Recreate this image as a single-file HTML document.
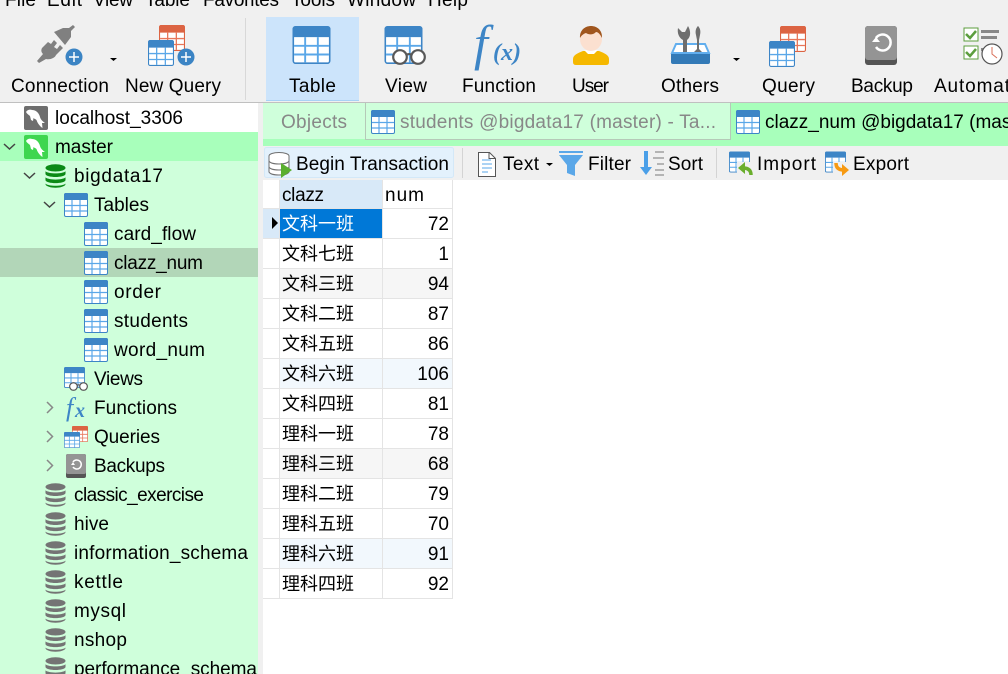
<!DOCTYPE html>
<html><head><meta charset="utf-8"><style>
html,body{margin:0;padding:0;background:#fff;overflow:hidden}
svg{display:block}
text{font-family:"Liberation Sans","Noto Sans CJK SC",sans-serif;font-size:19px;fill:#000}
.g{fill:#888}
.c{font-size:18px}
.fx{font-family:"Liberation Serif",serif;font-style:italic;fill:#3d85c6}
</style></head><body>
<svg width="1008" height="674" viewBox="0 0 1008 674" xmlns="http://www.w3.org/2000/svg">
<defs>
<symbol id="tb" viewBox="0 0 24 24">
<rect x=".5" y=".5" width="23" height="23" rx="1.500" fill="#fff" stroke="#3d85c6"/>
<path d="M0 2a2 2 0 0 1 2-2h20a2 2 0 0 1 2 2v5H0z" fill="#3d85c6"/>
<path d="M1 12.500h22M1 18h22M8 7v16M16 7v16" stroke="#5aa7e8" stroke-width="1.200" fill="none"/>
</symbol>
<symbol id="tr" viewBox="0 0 24 24">
<rect x=".5" y=".5" width="23" height="23" rx="1.500" fill="#fff" stroke="#dc6443"/>
<path d="M0 2a2 2 0 0 1 2-2h20a2 2 0 0 1 2 2v5H0z" fill="#dc6443"/>
<path d="M1 12.500h22M1 18h22M8 7v16M16 7v16" stroke="#e8765a" stroke-width="1.200" fill="none"/>
</symbol>
<symbol id="db" viewBox="0 0 22 25">
<ellipse cx="11" cy="4" rx="10.500" ry="3.800" fill="currentColor"/>
<path d="M.5 7.500c3 3 18 3 21 0v3c-1 4-20 4-21 0zM.5 14c3 3 18 3 21 0v3c-1 4-20 4-21 0zM.5 20.500c3 3 18 3 21 0v.5c-1 5-20 5-21 0z" fill="currentColor"/>
</symbol>
<symbol id="dol" viewBox="0 0 24 24">
<rect width="24" height="24" rx="2" fill="currentColor"/>
<path d="M2 6c1-2 4-3 6-2 4 0 7 3 8 7 .5 2 2 4 5 6l-3 0 .5 5c-3-2-5-5-6-8-1-1-2-1-3-2l-.5 3-2-1-1-4c-1-1-3-2-4-4z" fill="#fff"/>
</symbol>
<symbol id="glass" viewBox="0 0 34 18">
<circle cx="8" cy="9" r="6.800" fill="#fff" stroke="#595959" stroke-width="2.200"/>
<circle cx="26" cy="9" r="6.800" fill="#fff" stroke="#595959" stroke-width="2.200"/>
<path d="M14 7q3-2 6 0" stroke="#595959" stroke-width="2" fill="none"/>
</symbol>
</defs>

<!-- toolbar -->
<rect width="1008" height="102" fill="#f0f0f0"/>
<rect y="102" width="1008" height="1" fill="#c0c0c0"/>
<text x="5" y="6" textLength="31">File</text>
<text x="47" y="6" textLength="35">Edit</text>
<text x="93" y="6" textLength="40">View</text>
<text x="145" y="6" textLength="45">Table</text>
<text x="203" y="6" textLength="76">Favorites</text>
<text x="291" y="6" textLength="44">Tools</text>
<text x="347" y="6" textLength="69">Window</text>
<text x="428" y="6" textLength="40">Help</text>

<rect x="245" y="18" width="1" height="82" fill="#d8d8d8"/>
<rect x="266" y="17" width="93" height="84" fill="#cce4fb"/>
<rect x="266" y="100" width="93" height="1" fill="#a8d2f5"/>

<!-- connection icon -->
<g fill="#808080">
<path d="M54 32L63 28H69L73 25L75 27L71 31V37L65 45z"/>
<path d="M42 48L48 42L51 44L54 40L57 43L54 47L57 49L60 45L63 48L59 52L56 55C55 58 50 60 46 59L39 63L37 61L43 54C41 52 41 50 42 48z"/>
</g>
<circle cx="74" cy="57" r="8.500" fill="#3b84c4"/>
<path d="M69 57h10M74 52v10" stroke="#fff" stroke-width="1.500"/>
<path d="M110 58h7l-3.500 3z" fill="#000"/>

<!-- new query -->
<use href="#tr" x="159" y="25" width="26" height="26"/>
<use href="#tb" x="148" y="40" width="26" height="26"/>
<circle cx="186" cy="57" r="8.500" fill="#3b84c4"/>
<path d="M181 57h10M186 52v10" stroke="#fff" stroke-width="1.500"/>

<use href="#tb" x="292" y="26" width="39" height="38"/>
<!-- view -->
<use href="#tb" x="384" y="26" width="39" height="38"/>
<use href="#glass" x="392" y="48" width="34" height="18"/>
<!-- function -->
<text class="fx" x="474" y="60" style="font-size:50px" font-weight="normal">f</text>
<text class="fx" x="493" y="60" style="font-size:24px;font-weight:bold">(x)</text>
<!-- user -->
<path d="M573 59c0-4 5-6 10-8h16c5 2 10 4 10 8v3q0 3-3 3h-30q-3 0-3-3z" fill="#f5b800"/>
<path d="M584 50h14l-4 4h-6z" fill="#fff"/>
<ellipse cx="591" cy="39" rx="11" ry="12" fill="#fbe0d0"/>
<path d="M580 38c-1-16 23-16 22 0-2-4-4-6-6-6-3 3-7 3-10 1-3 1-5 3-6 5z" fill="#a0561e"/>
<!-- others -->
<path d="M671 54h39v8q0 2-2 2h-35q-2 0-2-2z" fill="#337ab7"/>
<path d="M672 53l4-9h29l4 9z" fill="#fff" stroke="#61aeee" stroke-width="2"/>
<path d="M683 52V40c-4-2-6-7-5-12l4 4h3l3-6c3 5 3 11-1 14v12z" fill="#6e6e6e"/>
<path d="M698 26c2 2 3 5 2 9l-1 5v9l3 3h-8l3-3v-9l-1-5c-1-4 0-7 2-9z" fill="#6e6e6e"/>
<path d="M733 58h7l-3.500 3z" fill="#000"/>
<!-- query -->
<use href="#tr" x="780" y="26" width="26" height="26"/>
<use href="#tb" x="769" y="41" width="26" height="26"/>
<!-- backup -->
<rect x="865" y="26" width="32" height="39" rx="3" fill="#555"/>
<rect x="865" y="26" width="32" height="34" rx="3" fill="#949494"/>
<path d="M876 38a8 8 0 1 1 0 9" stroke="#fff" stroke-width="2.500" fill="none"/>
<path d="M872 42h8l-4-5z" fill="#fff"/>
<!-- automation -->
<rect x="964" y="28" width="14" height="13" fill="#fff" stroke="#5c9e3e"/>
<rect x="964" y="46" width="14" height="13" fill="#fff" stroke="#5c9e3e"/>
<path d="M966 34l4 4 6-7M966 52l4 4 6-7" stroke="#5c9e3e" stroke-width="2.500" fill="none"/>
<rect x="981" y="30" width="18" height="3" fill="#888"/>
<rect x="981" y="36" width="16" height="3" fill="#888"/>
<rect x="981" y="48" width="6" height="3" fill="#888"/>
<circle cx="992" cy="54" r="10" fill="#fff" stroke="#555" stroke-width="1.200"/>
<path d="M992 47v7l5 4" stroke="#d9705a" fill="none"/>

<g>
<text x="11" y="92" textLength="98">Connection</text>
<text x="125" y="92" textLength="96">New Query</text>
<text x="289" y="92" textLength="47">Table</text>
<text x="385" y="92" textLength="42">View</text>
<text x="462" y="92" textLength="74">Function</text>
<text x="572" y="92" textLength="37">User</text>
<text x="661" y="92" textLength="58">Others</text>
<text x="762" y="92" textLength="53">Query</text>
<text x="851" y="92" textLength="62">Backup</text>
<text x="934" y="92" textLength="76">Automat</text>
</g>

<!-- tree -->
<rect y="103" width="258" height="29" fill="#fff"/>
<rect y="132" width="258" height="29" fill="#a8ffbb"/>
<rect y="161" width="258" height="513" fill="#cfffdb"/>
<rect y="248" width="258" height="29" fill="#b2d6b8"/>
<rect x="258" y="103" width="5" height="571" fill="#f0f0f0"/>

<use href="#dol" x="24" y="106" width="24" height="24" color="#6e6e6e"/>
<use href="#dol" x="24" y="135" width="24" height="24" color="#3ed64f"/>
<use href="#db" x="45" y="164" width="21" height="24" color="#0b8a16"/>
<use href="#tb" x="64" y="193" width="24" height="24"/>
<use href="#tb" x="84" y="222" width="24" height="24"/>
<use href="#tb" x="84" y="251" width="24" height="24"/>
<use href="#tb" x="84" y="280" width="24" height="24"/>
<use href="#tb" x="84" y="309" width="24" height="24"/>
<use href="#tb" x="84" y="338" width="24" height="24"/>
<!-- views -->
<use href="#tb" x="64" y="367" width="21" height="21"/>
<use href="#glass" x="69" y="381" width="19" height="11"/>
<!-- functions -->
<text class="fx" x="66" y="416" style="font-size:26px">f</text>
<text class="fx" x="75" y="417" style="font-size:20px;font-weight:bold">x</text>
<!-- queries -->
<use href="#tr" x="72" y="425" width="16" height="18"/>
<use href="#tb" x="64" y="431" width="16" height="18"/>
<!-- backups -->
<rect x="66" y="454" width="20" height="24" rx="2" fill="#555"/>
<rect x="66" y="454" width="20" height="20" rx="2" fill="#949494"/>
<path d="M73 462a4.500 4.500 0 1 1 0 5" stroke="#fff" stroke-width="1.500" fill="none"/>
<path d="M71 465h4l-2-3z" fill="#fff"/>

<g color="#747474">
<use href="#db" x="45" y="483" width="21" height="24"/>
<use href="#db" x="45" y="512" width="21" height="24"/>
<use href="#db" x="45" y="541" width="21" height="24"/>
<use href="#db" x="45" y="570" width="21" height="24"/>
<use href="#db" x="45" y="599" width="21" height="24"/>
<use href="#db" x="45" y="628" width="21" height="24"/>
<use href="#db" x="45" y="657" width="21" height="24"/>
</g>

<g stroke="#444" stroke-width="1.500" fill="none">
<path d="M4 144l5.500 5 5.500-5M24 173l5.500 5 5.500-5M44 202l5.500 5 5.500-5"/>
</g>
<g stroke="#888" stroke-width="1.500" fill="none">
<path d="M47 402l5.500 5.500-5.500 5.500M47 431l5.500 5.500-5.500 5.500M47 460l5.500 5.500-5.500 5.500"/>
</g>

<text x="55" y="124" textLength="128">localhost_3306</text>
<text x="55" y="153" textLength="58">master</text>
<text x="74" y="182" textLength="89">bigdata17</text>
<text x="94" y="211" textLength="55">Tables</text>
<text x="114" y="240" textLength="82">card_flow</text>
<text x="114" y="269" textLength="89">clazz_num</text>
<text x="114" y="298" textLength="47">order</text>
<text x="114" y="327" textLength="74">students</text>
<text x="114" y="356" textLength="91">word_num</text>
<text x="94" y="385" textLength="49">Views</text>
<text x="94" y="414" textLength="83">Functions</text>
<text x="94" y="443" textLength="66">Queries</text>
<text x="94" y="472" textLength="71">Backups</text>
<text x="74" y="501" textLength="130">classic_exercise</text>
<text x="74" y="530" textLength="35">hive</text>
<text x="74" y="559" textLength="174">information_schema</text>
<text x="74" y="588" textLength="49">kettle</text>
<text x="74" y="617" textLength="52">mysql</text>
<text x="74" y="646" textLength="53">nshop</text>
<text x="74" y="675" textLength="183">performance_schema</text>

<!-- tabs -->
<rect x="263" y="103" width="745" height="43" fill="#cfffdb"/>
<rect x="263" y="139" width="745" height="7" fill="#a8ffbb"/>
<rect x="730" y="103" width="278" height="43" fill="#a8ffbb"/>
<rect x="365" y="103" width="1" height="36" fill="#b5c9b8"/>
<rect x="365" y="139" width="365" height="1" fill="#b5c9b8"/>
<rect x="730" y="103" width="1" height="37" fill="#b5c9b8"/>
<text class="g" x="281" y="128" textLength="66">Objects</text>
<use href="#tb" x="371" y="110" width="24" height="24"/>
<text class="g" x="400" y="128" textLength="316">students @bigdata17 (master) - Ta...</text>
<use href="#tb" x="736" y="110" width="24" height="24"/>
<text x="765" y="128">clazz_num @bigdata17 (master) - Table</text>

<!-- toolbar 2 -->
<rect x="263" y="146" width="745" height="34" fill="#f0f0f0"/>
<rect x="264.500" y="147.500" width="189" height="30" rx="2" fill="#e3f1fc" stroke="#d3e8f8"/>
<ellipse cx="279" cy="156" rx="10" ry="3.500" fill="#fff" stroke="#707070"/>
<path d="M269 156v16c2 4 18 4 20 0v-16M269 161c2 4 18 4 20 0M269 167c2 4 18 4 20 0" fill="#fff" stroke="#707070"/>
<path d="M281 163l11 7-11 8z" fill="#5aaf2e"/>
<text x="296" y="170" textLength="153">Begin Transaction</text>
<rect x="462" y="148" width="1" height="30" fill="#d4d4d4"/>
<path d="M478.500 152.500h11l6 6v18h-17z" fill="#fff" stroke="#555"/>
<path d="M489 152.500v6h6" fill="none" stroke="#555"/>
<path d="M482 160h9M482 164h10M482 168h10M482 172h6" stroke="#5aa7e8"/>
<text x="503" y="170" textLength="36">Text</text>
<path d="M546 163h7l-3.500 3z" fill="#000"/>
<path d="M559 151h24v2h-24zM559 155h24l-8 10v11l-8-3v-8z" fill="#5aa7e8"/>
<text x="588" y="170" textLength="43">Filter</text>
<path d="M644 151h4v16h4l-6 8-6-8h4z" fill="#4a9fe8"/>
<path d="M655 152h9M653 158h11M657 164h7M655 170h9M655 175h9" stroke="#777" stroke-width="1"/>
<text x="668" y="170" textLength="35">Sort</text>
<rect x="716" y="148" width="1" height="30" fill="#d4d4d4"/>
<use href="#tb" x="729" y="151" width="21" height="22"/>
<rect x="737" y="162" width="18" height="14" fill="#f0f0f0"/>
<path d="M751 175c0-4-2-7-8-7" fill="none" stroke="#6aae2c" stroke-width="3.500"/>
<path d="M745 162v12l-7-6z" fill="#6aae2c"/>
<text x="757" y="170" textLength="59">Import</text>
<use href="#tb" x="825" y="151" width="21" height="22"/>
<rect x="833" y="162" width="18" height="14" fill="#f0f0f0"/>
<path d="M836 163c0 4 2 7 8 7" fill="none" stroke="#f79a12" stroke-width="3.500"/>
<path d="M842 164v12l7-6z" fill="#f79a12"/>
<text x="853" y="170" textLength="56">Export</text>

<!-- grid -->
<rect x="280" y="180" width="102" height="29" fill="#d8e9f8"/>
<rect x="263" y="209" width="17" height="30" fill="#d8e9f8"/>
<rect x="280" y="209" width="102" height="30" fill="#0078d7"/>
<rect x="280" y="269" width="173" height="30" fill="#f6f6f6"/>
<rect x="280" y="359" width="173" height="30" fill="#f2f8fd"/>
<rect x="280" y="449" width="173" height="30" fill="#f6f6f6"/>
<rect x="280" y="539" width="173" height="30" fill="#f2f8fd"/>
<path d="M263 208.500h190M263 238.500h190M263 268.500h190M263 298.500h190M263 328.500h190M263 358.500h190M263 388.500h190M263 418.500h190M263 448.500h190M263 478.500h190M263 508.500h190M263 538.500h190M263 568.500h190M263 598.500h190M279.500 180v419M382.500 180v419M452.500 180v419" stroke="#e4e4e4" fill="none"/>
<path d="M272 217l6 6-6 6z" fill="#000"/>

<text x="282" y="201" textLength="42">clazz</text>
<text x="385" y="201" textLength="39">num</text>

<g>
<text class="c" x="282" y="230" style="fill:#fff">文科一班</text>
<text class="c" x="282" y="260">文科七班</text>
<text class="c" x="282" y="290">文科三班</text>
<text class="c" x="282" y="320">文科二班</text>
<text class="c" x="282" y="350">文科五班</text>
<text class="c" x="282" y="380">文科六班</text>
<text class="c" x="282" y="410">文科四班</text>
<text class="c" x="282" y="440">理科一班</text>
<text class="c" x="282" y="470">理科三班</text>
<text class="c" x="282" y="500">理科二班</text>
<text class="c" x="282" y="530">理科五班</text>
<text class="c" x="282" y="560">理科六班</text>
<text class="c" x="282" y="590">理科四班</text>
</g>
<g text-anchor="end">
<text x="449" y="230">72</text>
<text x="449" y="260">1</text>
<text x="449" y="290">94</text>
<text x="449" y="320">87</text>
<text x="449" y="350">86</text>
<text x="449" y="380">106</text>
<text x="449" y="410">81</text>
<text x="449" y="440">78</text>
<text x="449" y="470">68</text>
<text x="449" y="500">79</text>
<text x="449" y="530">70</text>
<text x="449" y="560">91</text>
<text x="449" y="590">92</text>
</g>
</svg>
</body></html>
